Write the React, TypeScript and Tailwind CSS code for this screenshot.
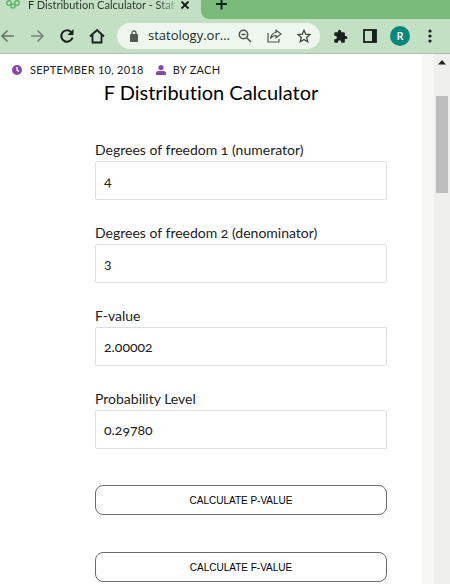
import { useState } from "react";

const fields = [
  { id: "df1", label: "Degrees of freedom 1 (numerator)", value: "4" },
  { id: "df2", label: "Degrees of freedom 2 (denominator)", value: "3" },
  { id: "fvalue", label: "F-value", value: "2.00002" },
  { id: "prob", label: "Probability Level", value: "0.29780" },
];

function TabStrip() {
  return (
    <div className="flex h-[19px] bg-[#c4e0c4]">
      <div className="flex w-[201px] items-end pb-[6px] pl-[5px]">
        <svg className="h-4 w-4 shrink-0" viewBox="0 0 16 16" fill="none" stroke="#5cb568" strokeWidth="1.4" aria-hidden="true">
          <circle cx="4" cy="6" r="2.200" />
          <circle cx="12" cy="6" r="2.200" />
          <circle cx="8" cy="9" r="2" />
        </svg>
        <span className="ml-[7px] w-[152px] shrink-0 bg-gradient-to-r from-[#26352b] from-85% to-[#c4e0c4] bg-clip-text font-['Lato',sans-serif] text-[11px] leading-4 whitespace-nowrap text-transparent [font-variant-ligatures:none]">
          F Distribution Calculator - Stat
        </span>
        <button aria-label="Close tab" className="flex h-[14px] w-4 items-center">
          <svg width="10" height="10" viewBox="0 0 10 10" stroke="#111b18" strokeWidth="1.8" aria-hidden="true">
            <path d="M1.500 0.500l7 7M8.500 0.500l-7 7" />
          </svg>
        </button>
      </div>
      <button aria-label="New tab" className="flex flex-1 items-start rounded-bl-lg bg-[#7aba7b] pl-[14px]">
        <svg width="13" height="10" viewBox="0 0 13 10" stroke="#10251a" strokeWidth="2" aria-hidden="true">
          <path d="M1 4h11M6.500 0v9.500" />
        </svg>
      </button>
    </div>
  );
}

function Toolbar() {
  return (
    <div className="flex h-[35px] items-center border-b border-[#b2bdb1] bg-[#c4e0c4]">
      <button aria-label="Back">
        <svg width="15" height="16" viewBox="0 0 15 16" fill="none" stroke="#68766a" strokeWidth="1.6" aria-hidden="true">
          <path d="M14 8H2M7.500 2.500L2 8l5.500 5.500" />
        </svg>
      </button>
      <button aria-label="Forward" className="ml-[15px]">
        <svg width="15" height="16" viewBox="0 0 15 16" fill="none" stroke="#768579" strokeWidth="1.6" aria-hidden="true">
          <path d="M1 8h12M7.500 2.500L13 8l-5.500 5.500" />
        </svg>
      </button>
      <button aria-label="Reload" className="ml-[14px]">
        <svg width="16" height="16" viewBox="0 0 16 16" fill="none" stroke="#17201c" strokeWidth="2" aria-hidden="true">
          <path d="M13.500 9.500A5.700 5.700 0 1 1 12 4" />
          <path d="M14.500 1v6h-6z" fill="#17201c" stroke="none" />
        </svg>
      </button>
      <button aria-label="Home" className="ml-[14px]">
        <svg width="16" height="16" viewBox="0 0 16 16" fill="none" stroke="#17201c" strokeWidth="1.8" aria-hidden="true">
          <path d="M1 8.500L8 2l7 6.500M3.500 7v7.500h9V7" />
        </svg>
      </button>
      <div className="ml-3 flex h-[26px] flex-1 items-center rounded-full bg-[#eef6ee] pr-[9px] pl-[13px]">
        <svg className="shrink-0" width="8" height="12" viewBox="0 0 8 12" aria-hidden="true">
          <rect y="4" width="8" height="8" rx="1" fill="#4f5b54" />
          <path d="M2 4.500V3a2 2 0 0 1 4 0v1.500" fill="none" stroke="#4f5b54" strokeWidth="1.300" />
        </svg>
        <span className="ml-[10px] flex-1 text-[13px] whitespace-nowrap text-[#202b25]">statology.or...</span>
        <button aria-label="Zoom out">
          <svg width="14" height="14" viewBox="0 0 14 14" fill="none" stroke="#4a5650" strokeWidth="1.500" aria-hidden="true">
            <circle cx="5.500" cy="5.500" r="4.200" />
            <path d="M8.700 8.700l4.300 4.300M3.500 5.500h4" />
          </svg>
        </button>
        <button aria-label="Share" className="ml-[15px]">
          <svg width="15" height="14" viewBox="0 0 15 14" fill="none" stroke="#4a5650" strokeWidth="1.200" aria-hidden="true">
            <path d="M1 4v9h11v-3" />
            <path d="M9 1.300L14 5 9 8.700V6.500C6.500 6.500 4.800 7.500 3.500 9.500 4 6 5.500 4 9 3.500z" />
          </svg>
        </button>
        <button aria-label="Bookmark" className="ml-[15px]">
          <svg width="14" height="14" viewBox="0 0 14 14" fill="none" stroke="#3d4843" strokeWidth="1.300" aria-hidden="true">
            <path d="M7 1.200l1.700 4 4.300.4-3.300 2.800 1 4.300L7 10.400l-3.700 2.300 1-4.300L1 5.600l4.300-.4z" />
          </svg>
        </button>
      </div>
      <button aria-label="Extensions" className="ml-[13px]">
        <svg width="15" height="15" viewBox="0 0 24 24" fill="#17201c" aria-hidden="true">
          <path d="M20.500 11H19V7a2 2 0 0 0-2-2h-4V3.500a2.500 2.500 0 0 0-5 0V5H4a2 2 0 0 0-2 2v3.800h1.500a2.700 2.700 0 0 1 0 5.400H2V20a2 2 0 0 0 2 2h3.800v-1.500a2.700 2.700 0 0 1 5.400 0V22H17a2 2 0 0 0 2-2v-4h1.500a2.500 2.500 0 0 0 0-5z" />
        </svg>
      </button>
      <button aria-label="Side panel" className="ml-[15px]">
        <svg width="14" height="14" viewBox="0 0 14 14" aria-hidden="true">
          <rect x="1" y="1" width="12" height="12" fill="none" stroke="#17201c" strokeWidth="1.800" />
          <path d="M9 1h4v12H9z" fill="#17201c" />
        </svg>
      </button>
      <button aria-label="Profile" className="ml-[13px] flex h-5 w-5 items-center justify-center rounded-full bg-[#08877c] text-[11px] font-semibold text-white">
        R
      </button>
      <button aria-label="Menu" className="mr-[18px] ml-[18px]">
        <svg width="4" height="14" viewBox="0 0 4 14" fill="#17201c" aria-hidden="true">
          <circle cx="2" cy="2" r="1.600" />
          <circle cx="2" cy="7" r="1.600" />
          <circle cx="2" cy="12" r="1.600" />
        </svg>
      </button>
    </div>
  );
}

function Field({ id, label, value }: { id: string; label: string; value: string }) {
  const [text, setText] = useState(value);
  return (
    <div className="flex flex-col">
      <label htmlFor={id} className="text-[14px] leading-[22px] whitespace-nowrap text-[#222] oldstyle-nums">
        {label}
      </label>
      <input
        id={id}
        value={text}
        onChange={(e) => setText(e.target.value)}
        className="h-[39px] w-full rounded-xs border border-[#dfdfdf] bg-white px-2 text-[14px] text-[#222] oldstyle-nums"
      />
    </div>
  );
}

function CalcButton({ children }: { children: string }) {
  return (
    <button className="h-[30px] w-full rounded-lg border border-[#6b6b6b] bg-white font-['Liberation_Sans',sans-serif] text-[10px] text-black">
      {children}
    </button>
  );
}

export default function App() {
  return (
    <div className="flex h-screen flex-col overflow-hidden bg-white">
      <header className="shrink-0 bg-[#c4e0c4] font-['Open_Sans',sans-serif]">
        <TabStrip />
        <Toolbar />
      </header>
      <div className="flex min-h-0 flex-1">
        <main className="min-w-0 flex-1 overflow-hidden font-['Lato',sans-serif]">
          <div className="flex items-center pt-[9px] pl-3 text-[11px] leading-[14px] text-[#222]">
            <svg width="10" height="10" viewBox="0 0 10 10" aria-hidden="true">
              <circle cx="5" cy="5" r="5" fill="#8549a8" />
              <path d="M5 2v3.200l2 1.200" fill="none" stroke="#fff" strokeWidth="1.300" />
            </svg>
            <span className="ml-2 tracking-wide">SEPTEMBER 10, 2018</span>
            <svg className="ml-3" width="10" height="10" viewBox="0 0 10 10" fill="#8549a8" aria-hidden="true">
              <circle cx="5" cy="2.600" r="2.600" />
              <path d="M0 10V8.500A2.500 2.500 0 0 1 2.500 6h5A2.500 2.500 0 0 1 10 8.500V10z" />
            </svg>
            <span className="ml-[7px] tracking-wide">BY ZACH</span>
          </div>
          <h1 className="text-center text-[20px] leading-[30px] text-black [font-variant-ligatures:none]">F Distribution Calculator</h1>
          <form className="pt-8 pr-[35px] pl-[95px]" onSubmit={(e) => e.preventDefault()}>
            <div className="flex flex-col gap-[22px]">
              {fields.map((f) => (
                <Field key={f.id} {...f} />
              ))}
            </div>
            <div className="flex flex-col gap-[37px] pt-9">
              <CalcButton>CALCULATE P-VALUE</CalcButton>
              <CalcButton>CALCULATE F-VALUE</CalcButton>
            </div>
          </form>
        </main>
        <div className="w-3 bg-[#f6f6f5]" />
        <div className="flex w-4 flex-col items-center bg-[#efefee] pt-[6px]">
          <svg width="8" height="5" viewBox="0 0 8 5" fill="#222" aria-hidden="true">
            <path d="M4 0l4 4.500H0z" />
          </svg>
          <div className="mt-[31px] h-[97px] w-3 bg-[#bdbdbd]" />
        </div>
      </div>
    </div>
  );
}
